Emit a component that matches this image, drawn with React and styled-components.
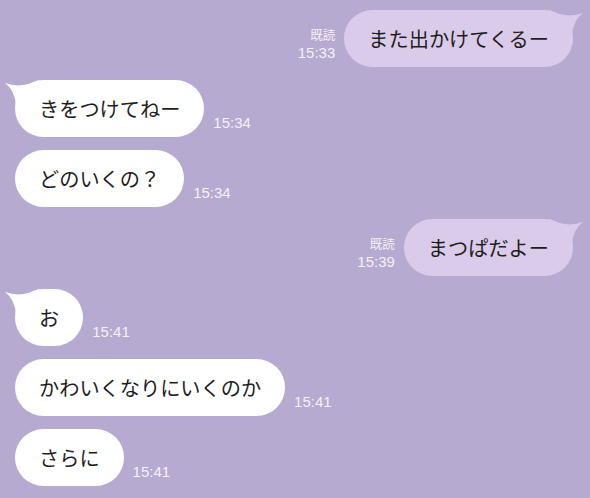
import styled, { createGlobalStyle } from 'styled-components';

const GlobalStyle = createGlobalStyle`
  html, body {
    margin: 0;
    padding: 0;
    background: #b6aad0;
  }
`;

const messages = [
    { id: 1, mine: true, text: 'また出かけてくるー', time: '15:33', tail: true },
    { id: 2, mine: false, text: 'きをつけてねー', time: '15:34', tail: true },
    { id: 3, mine: false, text: 'どのいくの？', time: '15:34' },
    { id: 4, mine: true, text: 'まつぱだよー', time: '15:39', tail: true },
    { id: 5, mine: false, text: 'お', time: '15:41', tail: true },
    { id: 6, mine: false, text: 'かわいくなりにいくのか', time: '15:41' },
    { id: 7, mine: false, text: 'さらに', time: '15:41' },
];

const Chat = styled.div`
  width: 590px;
  height: 498px;
  overflow: hidden;
  background: #b6aad0;
  padding-top: 10px;
  box-sizing: border-box;
  display: flex;
  flex-direction: column;
  gap: 12.8px;
`;

const Row = styled.div`
  display: flex;
  align-items: flex-end;
  justify-content: ${(p) => (p.$mine ? 'flex-end' : 'flex-start')};
  padding: ${(p) => (p.$mine ? '0 17px 0 0' : '0 0 0 15px')};
  gap: 9px;
`;

const Bubble = styled.div`
  position: relative;
  height: 57px;
  padding: 0 24px;
  border-radius: 28.5px;
  background: ${(p) => (p.$mine ? '#dbcbea' : '#ffffff')};
  color: #1e1e1e;
  font-family: "Noto Sans CJK JP", "Noto Sans", sans-serif;
  font-size: 20.2px;
  line-height: 57px;
  white-space: nowrap;
`;

const Tail = styled.svg`
  position: absolute;
  top: 0;
  ${(p) => (p.$mine ? 'right: -12px;' : 'left: -12px;')}
  width: 40px;
  height: 28px;
  overflow: visible;
`;

const Meta = styled.div`
  display: flex;
  flex-direction: column;
  align-items: ${(p) => (p.$mine ? 'flex-end' : 'flex-start')};
  margin-bottom: 6px;
  color: #f4f1f8;
`;

const Read = styled.span`
  font-family: "Noto Sans CJK JP", sans-serif;
  font-size: 12.5px;
  line-height: 18px;
`;

const Time = styled.span`
  font-family: "Liberation Sans", Arial, sans-serif;
  font-size: 15px;
  line-height: 17px;
`;

function BubbleTail({ mine, color }) {
    // drawn from the bubble's top corner, flipped for my own messages
    return (
        <Tail $mine={mine} viewBox="0 0 40 28">
            <path
                d="M2 3 Q18 9 36 0 L36 26 L13 26 Q12 10 2 3 Z"
                fill={color}
                transform={mine ? 'translate(40 0) scale(-1 1)' : undefined}
            />
        </Tail>
    );
}

export default function App() {
    return (
        <>
            <GlobalStyle />
            <Chat>
                {messages.map((m) => (
                    <Row key={m.id} $mine={m.mine}>
                        {m.mine && (
                            <Meta $mine>
                                <Read>既読</Read>
                                <Time>{m.time}</Time>
                            </Meta>
                        )}
                        <Bubble $mine={m.mine}>
                            {m.tail && <BubbleTail mine={m.mine} color={m.mine ? '#dbcbea' : '#ffffff'} />}
                            <span style={{ position: 'relative' }}>{m.text}</span>
                        </Bubble>
                        {!m.mine && (
                            <Meta>
                                <Time>{m.time}</Time>
                            </Meta>
                        )}
                    </Row>
                ))}
            </Chat>
        </>
    );
}
